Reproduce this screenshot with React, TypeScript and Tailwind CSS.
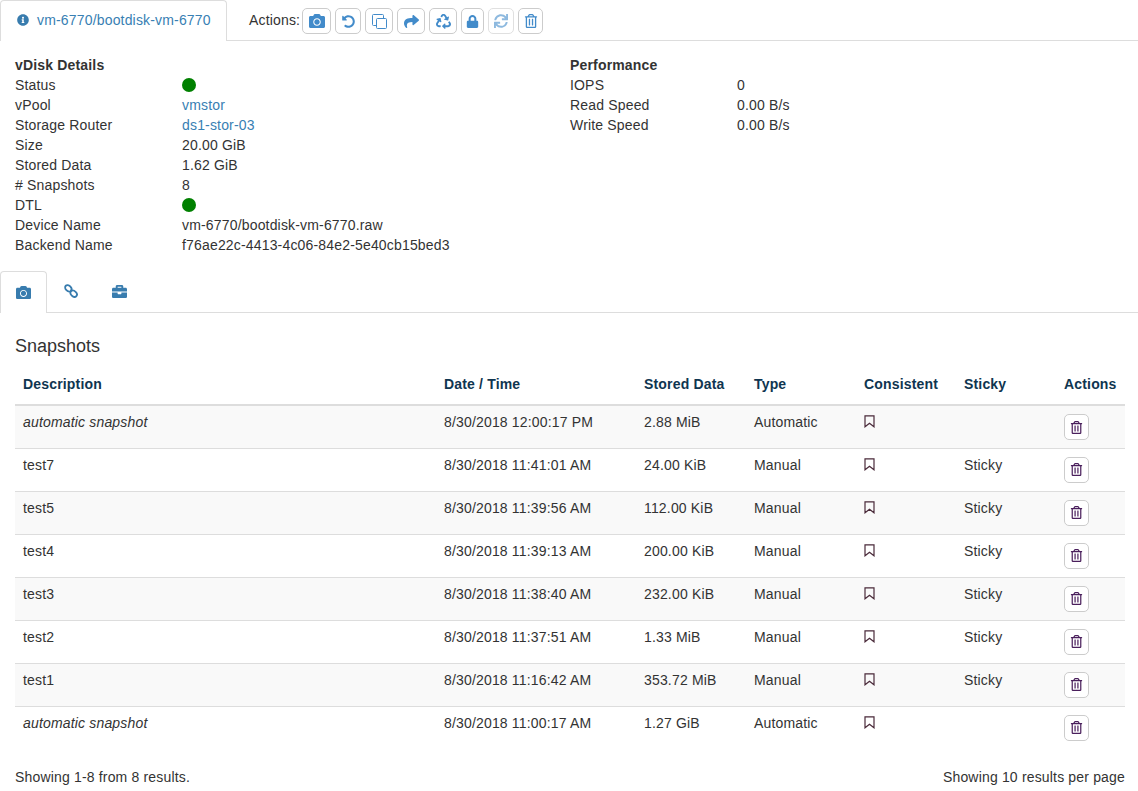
import {
  FaBriefcase,
  FaCamera,
  FaInfoCircle,
  FaLock,
  FaRecycle,
  FaRegTrashAlt,
  FaShare,
  FaSync,
  FaUndoAlt,
} from "react-icons/fa";

const details = [
  { label: "Status", dot: true },
  { label: "vPool", value: "vmstor", link: true },
  { label: "Storage Router", value: "ds1-stor-03", link: true },
  { label: "Size", value: "20.00 GiB" },
  { label: "Stored Data", value: "1.62 GiB" },
  { label: "# Snapshots", value: "8" },
  { label: "DTL", dot: true },
  { label: "Device Name", value: "vm-6770/bootdisk-vm-6770.raw" },
  { label: "Backend Name", value: "f76ae22c-4413-4c06-84e2-5e40cb15bed3" },
];

const performance = [
  { label: "IOPS", value: "0" },
  { label: "Read Speed", value: "0.00 B/s" },
  { label: "Write Speed", value: "0.00 B/s" },
];

const snapshots = [
  { name: "automatic snapshot", date: "8/30/2018 12:00:17 PM", stored: "2.88 MiB", type: "Automatic", sticky: "", auto: true },
  { name: "test7", date: "8/30/2018 11:41:01 AM", stored: "24.00 KiB", type: "Manual", sticky: "Sticky" },
  { name: "test5", date: "8/30/2018 11:39:56 AM", stored: "112.00 KiB", type: "Manual", sticky: "Sticky" },
  { name: "test4", date: "8/30/2018 11:39:13 AM", stored: "200.00 KiB", type: "Manual", sticky: "Sticky" },
  { name: "test3", date: "8/30/2018 11:38:40 AM", stored: "232.00 KiB", type: "Manual", sticky: "Sticky" },
  { name: "test2", date: "8/30/2018 11:37:51 AM", stored: "1.33 MiB", type: "Manual", sticky: "Sticky" },
  { name: "test1", date: "8/30/2018 11:16:42 AM", stored: "353.72 MiB", type: "Manual", sticky: "Sticky" },
  { name: "automatic snapshot", date: "8/30/2018 11:00:17 AM", stored: "1.27 GiB", type: "Automatic", sticky: "", auto: true },
];

const CloneIcon = () => (
  <svg width="15" height="15" viewBox="0 0 15 15" fill="none" stroke="currentColor" strokeWidth="1">
    <path d="M4.5 11.5h-3a1 1 0 0 1-1-1v-9a1 1 0 0 1 1-1h9a1 1 0 0 1 1 1v3" />
    <rect x="4.5" y="4.5" width="10" height="10" rx="1" />
  </svg>
);

const BookmarkIcon = () => (
  <svg width="11" height="13" viewBox="0 0 11 13" fill="none" stroke="currentColor" strokeWidth="1.2" className="text-[#4a2a3a]">
    <path d="M1 .8h9v11l-4.5-3.6L1 11.8z" />
  </svg>
);

const LinkIcon = () => (
  <svg width="14" height="14" viewBox="0 0 14 14" fill="none" stroke="currentColor" strokeWidth="1.8">
    <ellipse cx="4.3" cy="4.3" rx="3.6" ry="2.7" transform="rotate(45 4.3 4.3)" />
    <ellipse cx="9.7" cy="9.7" rx="3.6" ry="2.7" transform="rotate(45 9.7 9.7)" />
  </svg>
);

const actionButtons = [
  { icon: <FaCamera size={16} />, width: "w-[29px]" },
  { icon: <FaUndoAlt size={13} />, width: "w-[26px]" },
  { icon: <CloneIcon />, width: "w-[28px]" },
  { icon: <FaShare size={15} />, width: "w-[28px]" },
  { icon: <FaRecycle size={15} />, width: "w-[28px]" },
  { icon: <FaLock size={13} />, width: "w-[23px]" },
  { icon: <FaSync size={14} />, width: "w-[26px]", faded: true },
  { icon: <FaRegTrashAlt size={14} />, width: "w-[25px]" },
];

const App = () => {
  return (
    <div className="h-[791px] w-[1138px] overflow-hidden bg-white font-['Liberation_Sans',Arial,sans-serif] text-sm leading-5 tracking-[0.17px] text-[#333]">
      <div className="flex h-[41px] border-b border-[#ddd]">
        <div className="flex h-[41px] w-[227px] items-start rounded-t border border-b-0 border-[#ddd] bg-white pl-4 pt-[9px] text-[#3880b3]">
          <FaInfoCircle size={12} className="mt-1 mr-2 text-[#387cae]" />
          vm-6770/bootdisk-vm-6770
        </div>
        <div className="flex items-start pl-[22px] pt-2">
          <span className="mt-[2px] mr-[2px]">Actions:</span>
          <div className="flex gap-1">
            {actionButtons.map((button, index) => (
              <div
                key={index}
                className={`flex h-[26px] items-center justify-center rounded-[5px] border border-[#ccc] bg-white text-[#428bca] ${button.width} ${button.faded ? "opacity-60" : ""}`}
              >
                {button.icon}
              </div>
            ))}
          </div>
        </div>
      </div>

      <div className="flex px-[15px] pt-[14px]">
        <div className="w-[555px]">
          <div className="font-bold">vDisk Details</div>
          {details.map((row) => (
            <div key={row.label} className="flex h-5">
              <div className="w-[167px]">{row.label}</div>
              {row.dot ? (
                <div className="mt-[3px] h-[14px] w-[14px] rounded-full bg-[#008000]" />
              ) : (
                <div className={row.link ? "text-[#3880b3]" : ""}>{row.value}</div>
              )}
            </div>
          ))}
        </div>
        <div>
          <div className="font-bold">Performance</div>
          {performance.map((row) => (
            <div key={row.label} className="flex h-5">
              <div className="w-[167px]">{row.label}</div>
              <div>{row.value}</div>
            </div>
          ))}
        </div>
      </div>

      <div className="mt-4 flex h-[42px] border-b border-[#ddd] text-[#387cae]">
        <div className="flex h-[42px] w-[47px] items-center justify-center rounded-t border border-b-0 border-[#ddd] bg-white">
          <FaCamera size={15} />
        </div>
        <div className="flex w-[48px] items-center justify-center pb-[1px]">
          <LinkIcon />
        </div>
        <div className="flex w-[48px] items-center justify-center pb-[1px]">
          <FaBriefcase size={15} />
        </div>
      </div>

      <div className="px-[15px]">
        <div className="mt-[23px] text-lg leading-5 tracking-normal">Snapshots</div>
        <table className="mt-[8px] w-[1110px] table-fixed border-collapse">
          <thead>
            <tr className="h-[41px] border-b-2 border-[#ddd] text-left font-bold text-[#0f3550]">
              <th className="w-[421px] px-2">Description</th>
              <th className="w-[200px] px-2">Date / Time</th>
              <th className="w-[110px] px-2">Stored Data</th>
              <th className="w-[110px] px-2">Type</th>
              <th className="w-[100px] px-2">Consistent</th>
              <th className="w-[100px] px-2">Sticky</th>
              <th className="w-[69px] px-2">Actions</th>
            </tr>
          </thead>
          <tbody>
            {snapshots.map((snap, index) => (
              <tr
                key={index}
                className={`h-[43px] border-b border-[#ddd] align-top last:border-b-0 ${index % 2 === 0 ? "bg-[#f9f9f9]" : "bg-white"}`}
              >
                <td className={`px-2 pt-[6px] ${snap.auto ? "italic" : ""}`}>{snap.name}</td>
                <td className="px-2 pt-[6px]">{snap.date}</td>
                <td className="px-2 pt-[6px]">{snap.stored}</td>
                <td className="px-2 pt-[6px]">{snap.type}</td>
                <td className="px-2 pt-[9px]">
                  <BookmarkIcon />
                </td>
                <td className="px-2 pt-[6px]">{snap.sticky}</td>
                <td className="px-2 pt-2">
                  <div className="flex h-[26px] w-[25px] items-center justify-center rounded-[5px] border border-[#ccc] bg-white text-[#4a1f5c]">
                    <FaRegTrashAlt size={13} />
                  </div>
                </td>
              </tr>
            ))}
          </tbody>
        </table>
        <div className="mt-[18px] flex w-[1110px] justify-between">
          <div>Showing 1-8 from 8 results.</div>
          <div>Showing 10 results per page</div>
        </div>
      </div>
    </div>
  );
};

export default App;
